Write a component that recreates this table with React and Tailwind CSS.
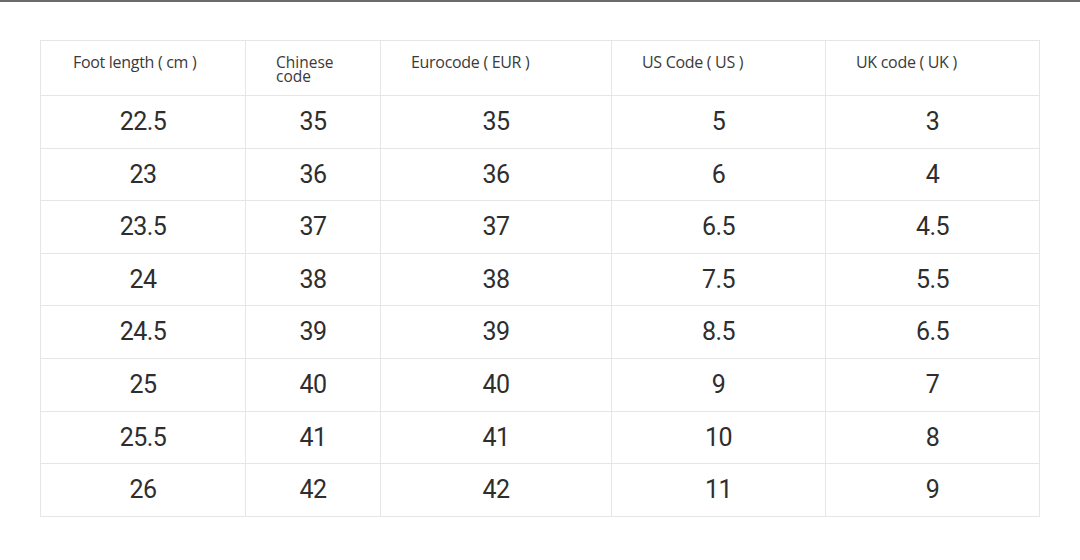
import React from "react";

const rows = [
  ["22.5", "35", "35", "5", "3"],
  ["23", "36", "36", "6", "4"],
  ["23.5", "37", "37", "6.5", "4.5"],
  ["24", "38", "38", "7.5", "5.5"],
  ["24.5", "39", "39", "8.5", "6.5"],
  ["25", "40", "40", "9", "7"],
  ["25.5", "41", "41", "10", "8"],
  ["26", "42", "42", "11", "9"],
];

export default function App() {
  return (
    <div className="w-[1080px] h-[560px] bg-white overflow-hidden">
      <div className="h-[2px] bg-[#6b6b6b]" />
      <div className="pt-[38px] pl-[40px]">
        <table className="border-collapse border border-[#e6e6e6] text-[#333333] table-fixed w-[1000px]">
          <colgroup>
            <col className="w-[205px]" />
            <col className="w-[135px]" />
            <col className="w-[231px]" />
            <col className="w-[214px]" />
            <col className="w-[214px]" />
          </colgroup>
          <thead>
            <tr className="h-[55px]">
              {["Foot length ( cm )", null, "Eurocode ( EUR )", "US Code ( US )", "UK code ( UK )"].map((h, i) => (
                <th
                  key={i}
                  className={`border border-[#e6e6e6] align-top text-left font-normal pt-[10px] text-[16px] text-[#3a3a3a] [font-family:'Open_Sans',sans-serif] ${i === 0 ? "pl-[32px]" : "pl-[30px]"}`}
                >
                  {h === null ? (
                    <div className="leading-[14px] pt-[4px] text-[15.5px]">
                      Chinese
                      <br />
                      code
                    </div>
                  ) : (
                    <div className="leading-[22px] tracking-[-0.3px]">{h}</div>
                  )}
                </th>
              ))}
            </tr>
          </thead>
          <tbody>
            {rows.map((r, ri) => (
              <tr key={ri} className="h-[52.6px]">
                {r.map((c, ci) => (
                  <td
                    key={ci}
                    className="border border-[#e6e6e6] text-center align-middle text-[25px] tracking-[-0.6px] text-[#2e2e2e] [font-family:Roboto,sans-serif]"
                  >
                    {c}
                  </td>
                ))}
              </tr>
            ))}
          </tbody>
        </table>
      </div>
    </div>
  );
}
